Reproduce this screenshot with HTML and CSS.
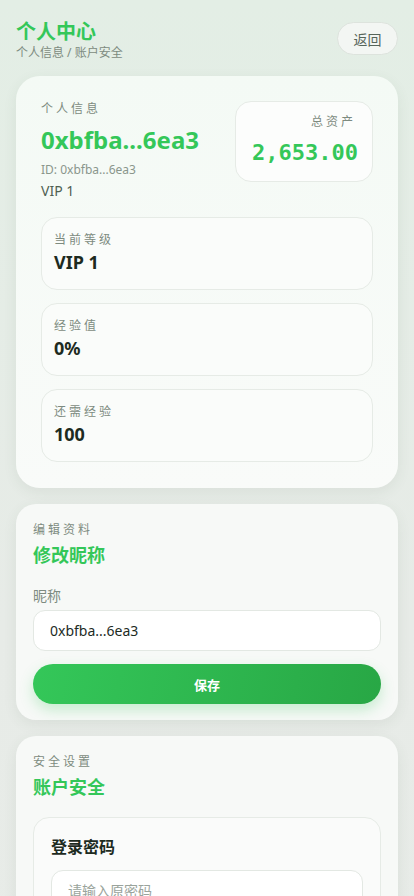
FILE: index.html
```html
<!DOCTYPE html>
<html lang="zh-CN">
<head>
  <meta charset="UTF-8" />
  <meta name="viewport" content="width=device-width, initial-scale=1" />
  <title>个人中心</title>
  <link rel="stylesheet" href="styles.css">
</head>
<body>

  <header class="top">
    <div>
      <h1>个人中心</h1>
      <div class="crumb">个人信息 / 账户安全</div>
    </div>
    <button class="back">返回</button>
  </header>

  <section class="card">
    <div class="profile">
      <div>
        <div class="label">个人信息</div>
        <div class="addr">0xbfba...6ea3</div>
        <div class="uid">ID: 0xbfba...6ea3</div>
        <div class="vip">VIP 1</div>
      </div>
      <div class="asset">
        <div class="label">总资产</div>
        <div class="amount">2,653.00</div>
      </div>
    </div>

    <div class="stat">
      <div class="label">当前等级</div>
      <div class="val">VIP 1</div>
    </div>
    <div class="stat">
      <div class="label">经验值</div>
      <div class="val">0%</div>
    </div>
    <div class="stat">
      <div class="label">还需经验</div>
      <div class="val">100</div>
    </div>
  </section>

  <section class="card small">
    <div class="label">编辑资料</div>
    <h2>修改昵称</h2>
    <label class="field-label" for="nick">昵称</label>
    <input id="nick" class="input" type="text" value="0xbfba...6ea3" />
    <button class="save">保存</button>
  </section>

  <section class="card small">
    <div class="label">安全设置</div>
    <h2>账户安全</h2>
    <div class="box">
      <h3>登录密码</h3>
      <input class="input" type="password" placeholder="请输入原密码" />
      <input class="input" type="password" placeholder="请输入新密码" />
    </div>
  </section>

</body>
</html>
```

FILE: styles.css
```css
body {
  margin: 0;
  padding: 16px;
  font-family: "Noto Sans", "Noto Sans CJK SC", sans-serif;
  background: linear-gradient(180deg, #e3eee5 0%, #e7ebe7 60%, #e8ece8 100%);
  color: #1d2b1f;
  min-height: 100vh;
  box-sizing: border-box;
}
.top {
  display: flex;
  justify-content: space-between;
  align-items: flex-start;
  margin-bottom: 15px;
}
h1 {
  margin: 3px 0 0;
  font-size: 20px;
  line-height: 26px;
  color: #34c759;
  font-weight: 700;
}
.crumb {
  font-size: 12px;
  color: #7d8b80;
  line-height: 16px;
}
.back {
  margin-top: 6px;
  width: 61px;
  height: 33px;
  border-radius: 17px;
  border: 1px solid #dde3dd;
  background: #f3f6f3;
  color: #56655a;
  font-family: inherit;
  font-size: 14px;
}
.card {
  background: linear-gradient(180deg, #f4faf5 0%, #f9fbf9 100%);
  border-radius: 24px;
  padding: 25px 25px 26px;
  box-shadow: 0 4px 14px rgba(60, 90, 60, 0.08);
  margin-bottom: 16px;
}
.card.small {
  padding: 18px 17px 16px;
  border-radius: 20px;
  background: #f7f9f7;
}
.label {
  font-size: 12px;
  letter-spacing: 3px;
  color: #7d8b80;
  line-height: 16px;
}
.profile {
  display: flex;
  justify-content: space-between;
  margin-bottom: 16px;
}
.addr {
  margin-top: 7px;
  font-size: 24px;
  font-weight: 700;
  color: #34c759;
  line-height: 32px;
}
.uid {
  font-size: 12px;
  color: #8a968c;
  margin-top: 6px;
  line-height: 16px;
}
.vip {
  font-size: 14px;
  color: #4f5f52;
  margin-top: 3px;
  line-height: 20px;
}
.asset {
  width: 138px;
  height: 81px;
  box-sizing: border-box;
  padding: 12px 16px;
  background: #fcfdfc;
  border: 1px solid #e6ebe6;
  border-radius: 16px;
  text-align: right;
}
.amount {
  margin-top: 10px;
  font-family: "DejaVu Sans Mono", monospace;
  font-size: 22px;
  font-weight: 700;
  color: #34c759;
}
.stat {
  background: #fafcfa;
  border: 1px solid #e6ebe6;
  border-radius: 16px;
  padding: 14px 12px 15px;
  margin-bottom: 13px;
}
.stat:last-child {
  margin-bottom: 0;
}
.stat .val {
  font-size: 18px;
  font-weight: 700;
  color: #1d2b1f;
  margin-top: 2px;
  line-height: 24px;
}
h2 {
  margin: 4px 0 17px;
  font-size: 18px;
  color: #34c759;
  line-height: 26px;
}
.field-label {
  display: block;
  font-size: 14px;
  color: #7d8b80;
  margin-bottom: 5px;
}
.input {
  display: block;
  width: 100%;
  box-sizing: border-box;
  height: 41px;
  padding: 0 16px;
  border: 1px solid #e3e8e3;
  border-radius: 12px;
  background: #fff;
  font-family: inherit;
  font-size: 14px;
  color: #1d2b1f;
}
.input::placeholder {
  color: #9aa49c;
}
.save {
  display: block;
  width: 100%;
  height: 40px;
  margin-top: 13px;
  border: none;
  border-radius: 20px;
  background: linear-gradient(100deg, #34c759 0%, #28a745 100%);
  color: #fff;
  font-family: inherit;
  font-size: 13px;
  font-weight: 700;
  box-shadow: 0 6px 14px rgba(52, 199, 89, 0.25);
}
.box {
  background: #fafbfa;
  border: 1px solid #e6ebe6;
  border-radius: 16px;
  padding: 17px 17px;
}
h3 {
  margin: 0 0 11px;
  font-size: 16px;
  line-height: 24px;
}
.box .input {
  margin-bottom: 12px;
}
```
